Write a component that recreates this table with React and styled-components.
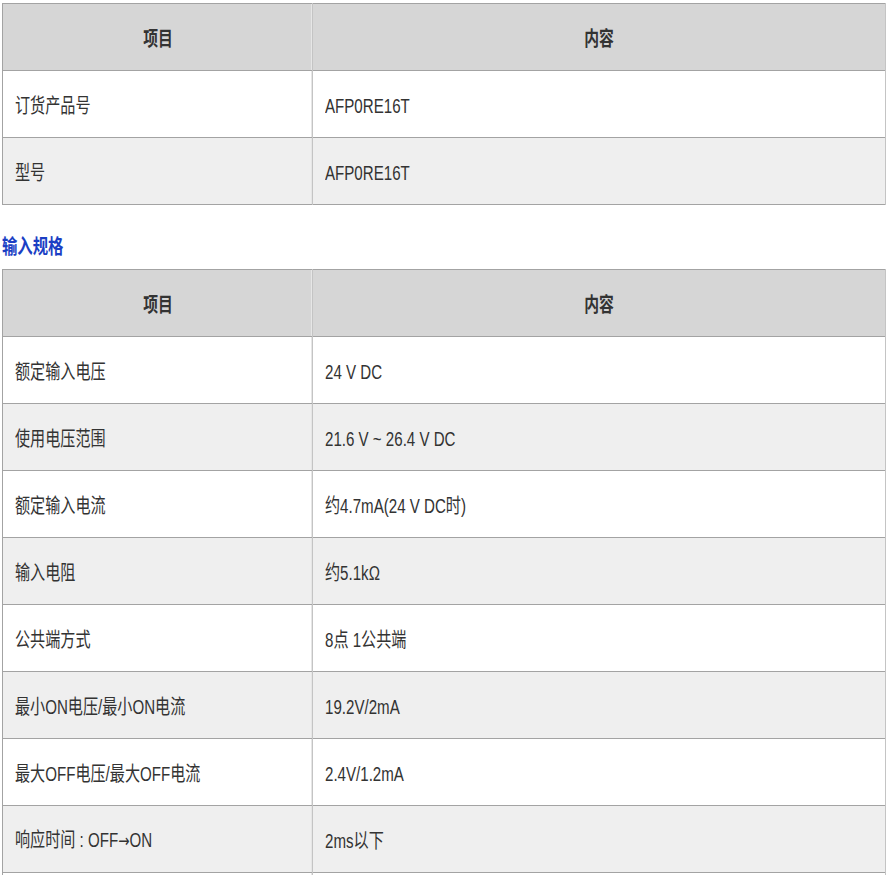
import React from "react";
import styled, { createGlobalStyle } from "styled-components";

const Global = createGlobalStyle`
  html, body { margin: 0; padding: 0; background: #fff; }
  body { font-family: "Liberation Sans", "Noto Sans CJK SC", sans-serif; color: #333; }
`;

const Page = styled.div`
  padding: 3px 4px 0 2px;
  width: 884px;
`;

const Table = styled.table`
  width: 884px;
  border-collapse: collapse;
  table-layout: fixed;
  border: 1px solid #a3a3a3;
`;

const Row = styled.tr`
  background: ${(p) => (p.$alt ? "#efefef" : "#ffffff")};
  height: 67px;
  border-bottom: 1px solid #a3a3a3;
`;

const HeadRow = styled.tr`
  background: #d6d6d6;
  height: 67px;
  border-bottom: 1px solid #a3a3a3;
`;

const Th = styled.th`
  padding: 0;
  text-align: center;
  vertical-align: middle;
  font-weight: bold;
  color: #333;
  border-right: 1px solid #c4c4c4;
  box-shadow: ${(p) => (p.$first ? "inset -1px 0 0 #e6e6e6" : "none")};
  width: ${(p) => (p.$first ? "309px" : "auto")};
`;

const Td = styled.td`
  padding: 0 0 0 12px;
  vertical-align: middle;
  border-right: 1px solid #c4c4c4;
  box-shadow: ${(p) => (p.$first ? "inset -1px 0 0 #e6e6e6" : "none")};
`;

const Text = styled.span`
  display: inline-block;
  font-size: 20px;
  line-height: 24px;
  padding-top: 3px;
  white-space: nowrap;
  color: #333;
  font-weight: ${(p) => (p.$bold ? "bold" : "normal")};
  transform: scaleX(${(p) => (p.$bold ? 0.74 : 0.755)});
  transform-origin: ${(p) => (p.$center ? "center" : "left")};
`;

const Arrow = styled.span`
  font-family: "DejaVu Sans", sans-serif;
  font-size: 18px;
`;

const Heading = styled.h3`
  margin: 0;
  padding: 29px 0 9px 0;
  height: 26px;
  line-height: 26px;
  font-size: 20.5px;
  font-weight: bold;
  color: #1b3fc4;
  & > span {
    display: inline-block;
    transform: scaleX(0.75);
    transform-origin: left;
  }
`;

const renderValue = (s) => {
  const parts = s.split("→");
  if (parts.length === 1) return s;
  return (
    <>
      {parts[0]}
      <Arrow>→</Arrow>
      {parts[1]}
    </>
  );
};

const SpecTable = ({ rows }) => (
  <Table>
    <tbody>
      <HeadRow>
        <Th $first>
          <Text $bold $center>项目</Text>
        </Th>
        <Th>
          <Text $bold $center>内容</Text>
        </Th>
      </HeadRow>
      {rows.map(([k, v], i) => (
        <Row key={i} $alt={i % 2 === 1}>
          <Td $first>
            <Text>{renderValue(k)}</Text>
          </Td>
          <Td>
            <Text>{renderValue(v)}</Text>
          </Td>
        </Row>
      ))}
    </tbody>
  </Table>
);

const basic = [
  ["订货产品号", "AFP0RE16T"],
  ["型号", "AFP0RE16T"],
];

const input = [
  ["额定输入电压", "24 V DC"],
  ["使用电压范围", "21.6 V ~ 26.4 V DC"],
  ["额定输入电流", "约4.7mA(24 V DC时)"],
  ["输入电阻", "约5.1kΩ"],
  ["公共端方式", "8点 1公共端"],
  ["最小ON电压/最小ON电流", "19.2V/2mA"],
  ["最大OFF电压/最大OFF电流", "2.4V/1.2mA"],
  ["响应时间 : OFF→ON", "2ms以下"],
  ["响应时间 : ON→OFF", "2ms以下"],
];

export default function App() {
  return (
    <>
      <Global />
      <Page>
        <SpecTable rows={basic} />
        <Heading>
          <span>输入规格</span>
        </Heading>
        <SpecTable rows={input} />
      </Page>
    </>
  );
}
